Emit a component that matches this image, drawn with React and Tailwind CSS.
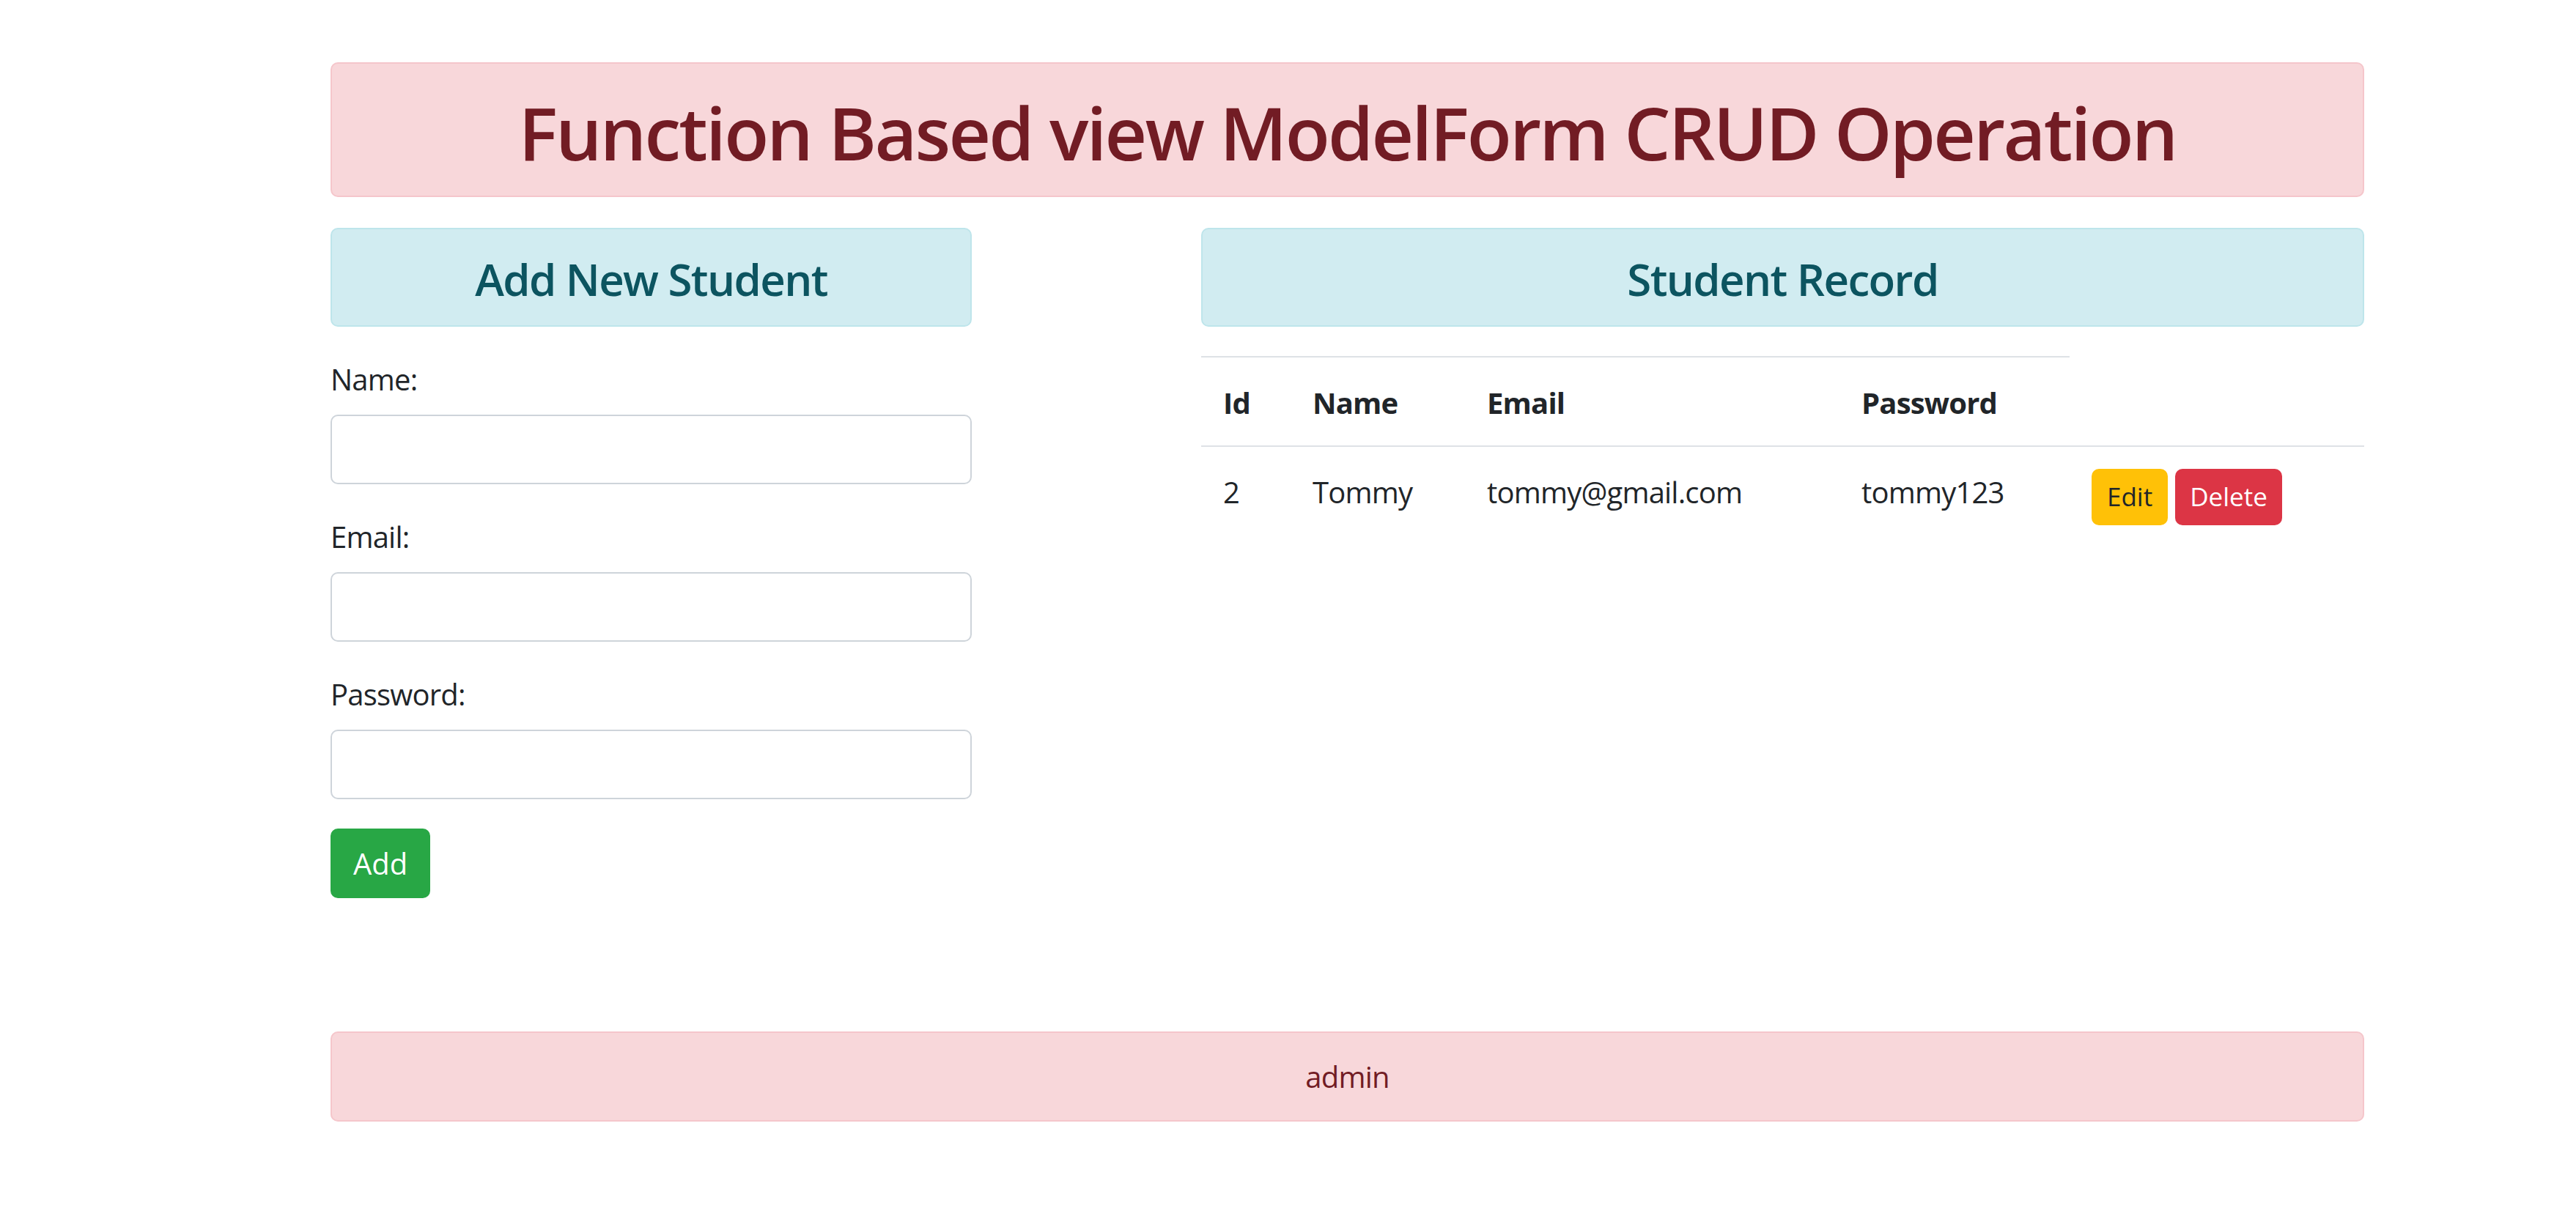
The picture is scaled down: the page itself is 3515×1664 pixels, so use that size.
import React from "react";

const students = [
  { id: 2, name: "Tommy", email: "tommy@gmail.com", password: "tommy123" },
];

function Field({ label, type }) {
  return (
    <div className="mb-[40px]">
      <label className="block h-[60px] leading-[60px] mb-[20px] translate-y-[2px]">{label}</label>
      <input
        type={type}
        className="block w-full h-[95px] px-[30px] border-2 border-[#ced4da] rounded-[10px] bg-white outline-none"
      />
    </div>
  );
}

export default function App() {
  return (
    <div
      className="min-h-screen bg-white text-[#212529] text-[40px] tracking-[-0.8px]"
      style={{ fontFamily: '"Open Sans", "Noto Sans", sans-serif' }}
    >
      <div className="ml-[451px] w-[2775px] pt-[85px]">
        <div className="h-[184px] flex items-center justify-center rounded-[10px] border-2 border-[#f5c6cb] bg-[#f8d7da] text-[#721c24]">
          <h1 className="text-[100px] leading-[120px] font-semibold tracking-[-2.8px] translate-y-[3px]">
            Function Based view ModelForm CRUD Operation
          </h1>
        </div>

        <div className="mt-[42px] flex gap-[313px]">
          {/* add form */}
          <div className="w-[875px] shrink-0">
            <div className="h-[135px] mb-[40px] flex items-center justify-center rounded-[10px] border-2 border-[#bee5eb] bg-[#d1ecf1] text-[#0c5460]">
              <h4 className="text-[60px] leading-[72px] font-semibold tracking-[-1.6px] translate-y-[2px]">Add New Student</h4>
            </div>
            <form onSubmit={(e) => e.preventDefault()}>
              <Field label="Name:" type="text" />
              <Field label="Email:" type="email" />
              <Field label="Password:" type="password" />
              <button
                type="submit"
                className="h-[95px] px-[31px] rounded-[10px] bg-[#28a745] text-white leading-[60px] tracking-normal"
              >
                Add
              </button>
            </form>
          </div>

          {/* records */}
          <div className="w-[1587px] shrink-0">
            <div className="h-[135px] mb-[40px] flex items-center justify-center rounded-[10px] border-2 border-[#bee5eb] bg-[#d1ecf1] text-[#0c5460]">
              <h4 className="text-[60px] leading-[72px] font-semibold tracking-[-1.6px] translate-y-[2px]">Student Record</h4>
            </div>
            <table className="w-full table-fixed border-collapse">
              <colgroup>
                <col className="w-[122px]" />
                <col className="w-[238px]" />
                <col className="w-[511px]" />
                <col className="w-[314px]" />
                <col />
              </colgroup>
              <thead>
                <tr>
                  <th className="text-left font-bold px-[30px] pt-[32px] pb-[28px] leading-[60px] border-t-2 border-b-2 border-[#dee2e6]">Id</th>
                  <th className="text-left font-bold px-[30px] pt-[32px] pb-[28px] leading-[60px] border-t-2 border-b-2 border-[#dee2e6]">Name</th>
                  <th className="text-left font-bold px-[30px] pt-[32px] pb-[28px] leading-[60px] border-t-2 border-b-2 border-[#dee2e6]">Email</th>
                  <th className="text-left font-bold px-[30px] pt-[32px] pb-[28px] leading-[60px] border-t-2 border-b-2 border-[#dee2e6]">Password</th>
                </tr>
              </thead>
              <tbody>
                {students.map((s) => (
                  <tr key={s.id}>
                    <td className="align-top px-[30px] pt-[32px] pb-[28px] leading-[60px] border-t-2 border-[#dee2e6]">{s.id}</td>
                    <td className="align-top px-[30px] pt-[32px] pb-[28px] leading-[60px] border-t-2 border-[#dee2e6]">{s.name}</td>
                    <td className="align-top px-[30px] pt-[32px] pb-[28px] leading-[60px] border-t-2 border-[#dee2e6]">{s.email}</td>
                    <td className="align-top px-[30px] pt-[32px] pb-[28px] leading-[60px] border-t-2 border-[#dee2e6]">{s.password}</td>
                    <td className="align-top px-[30px] py-[30px] border-t-2 border-[#dee2e6]">
                      <div className="flex gap-[10px] tracking-normal">
                        <button className="h-[77px] px-[21px] rounded-[10px] bg-[#ffc107] text-[#212529] text-[35px]">Edit</button>
                        <button className="h-[77px] px-[20px] rounded-[10px] bg-[#dc3545] text-white text-[35px]">Delete</button>
                      </div>
                    </td>
                  </tr>
                ))}
              </tbody>
            </table>
          </div>
        </div>

        <div className="mt-[182px] h-[123px] flex items-center justify-center rounded-[10px] border-2 border-[#f5c6cb] bg-[#f8d7da] text-[#721c24]">
          admin
        </div>
      </div>
    </div>
  );
}
